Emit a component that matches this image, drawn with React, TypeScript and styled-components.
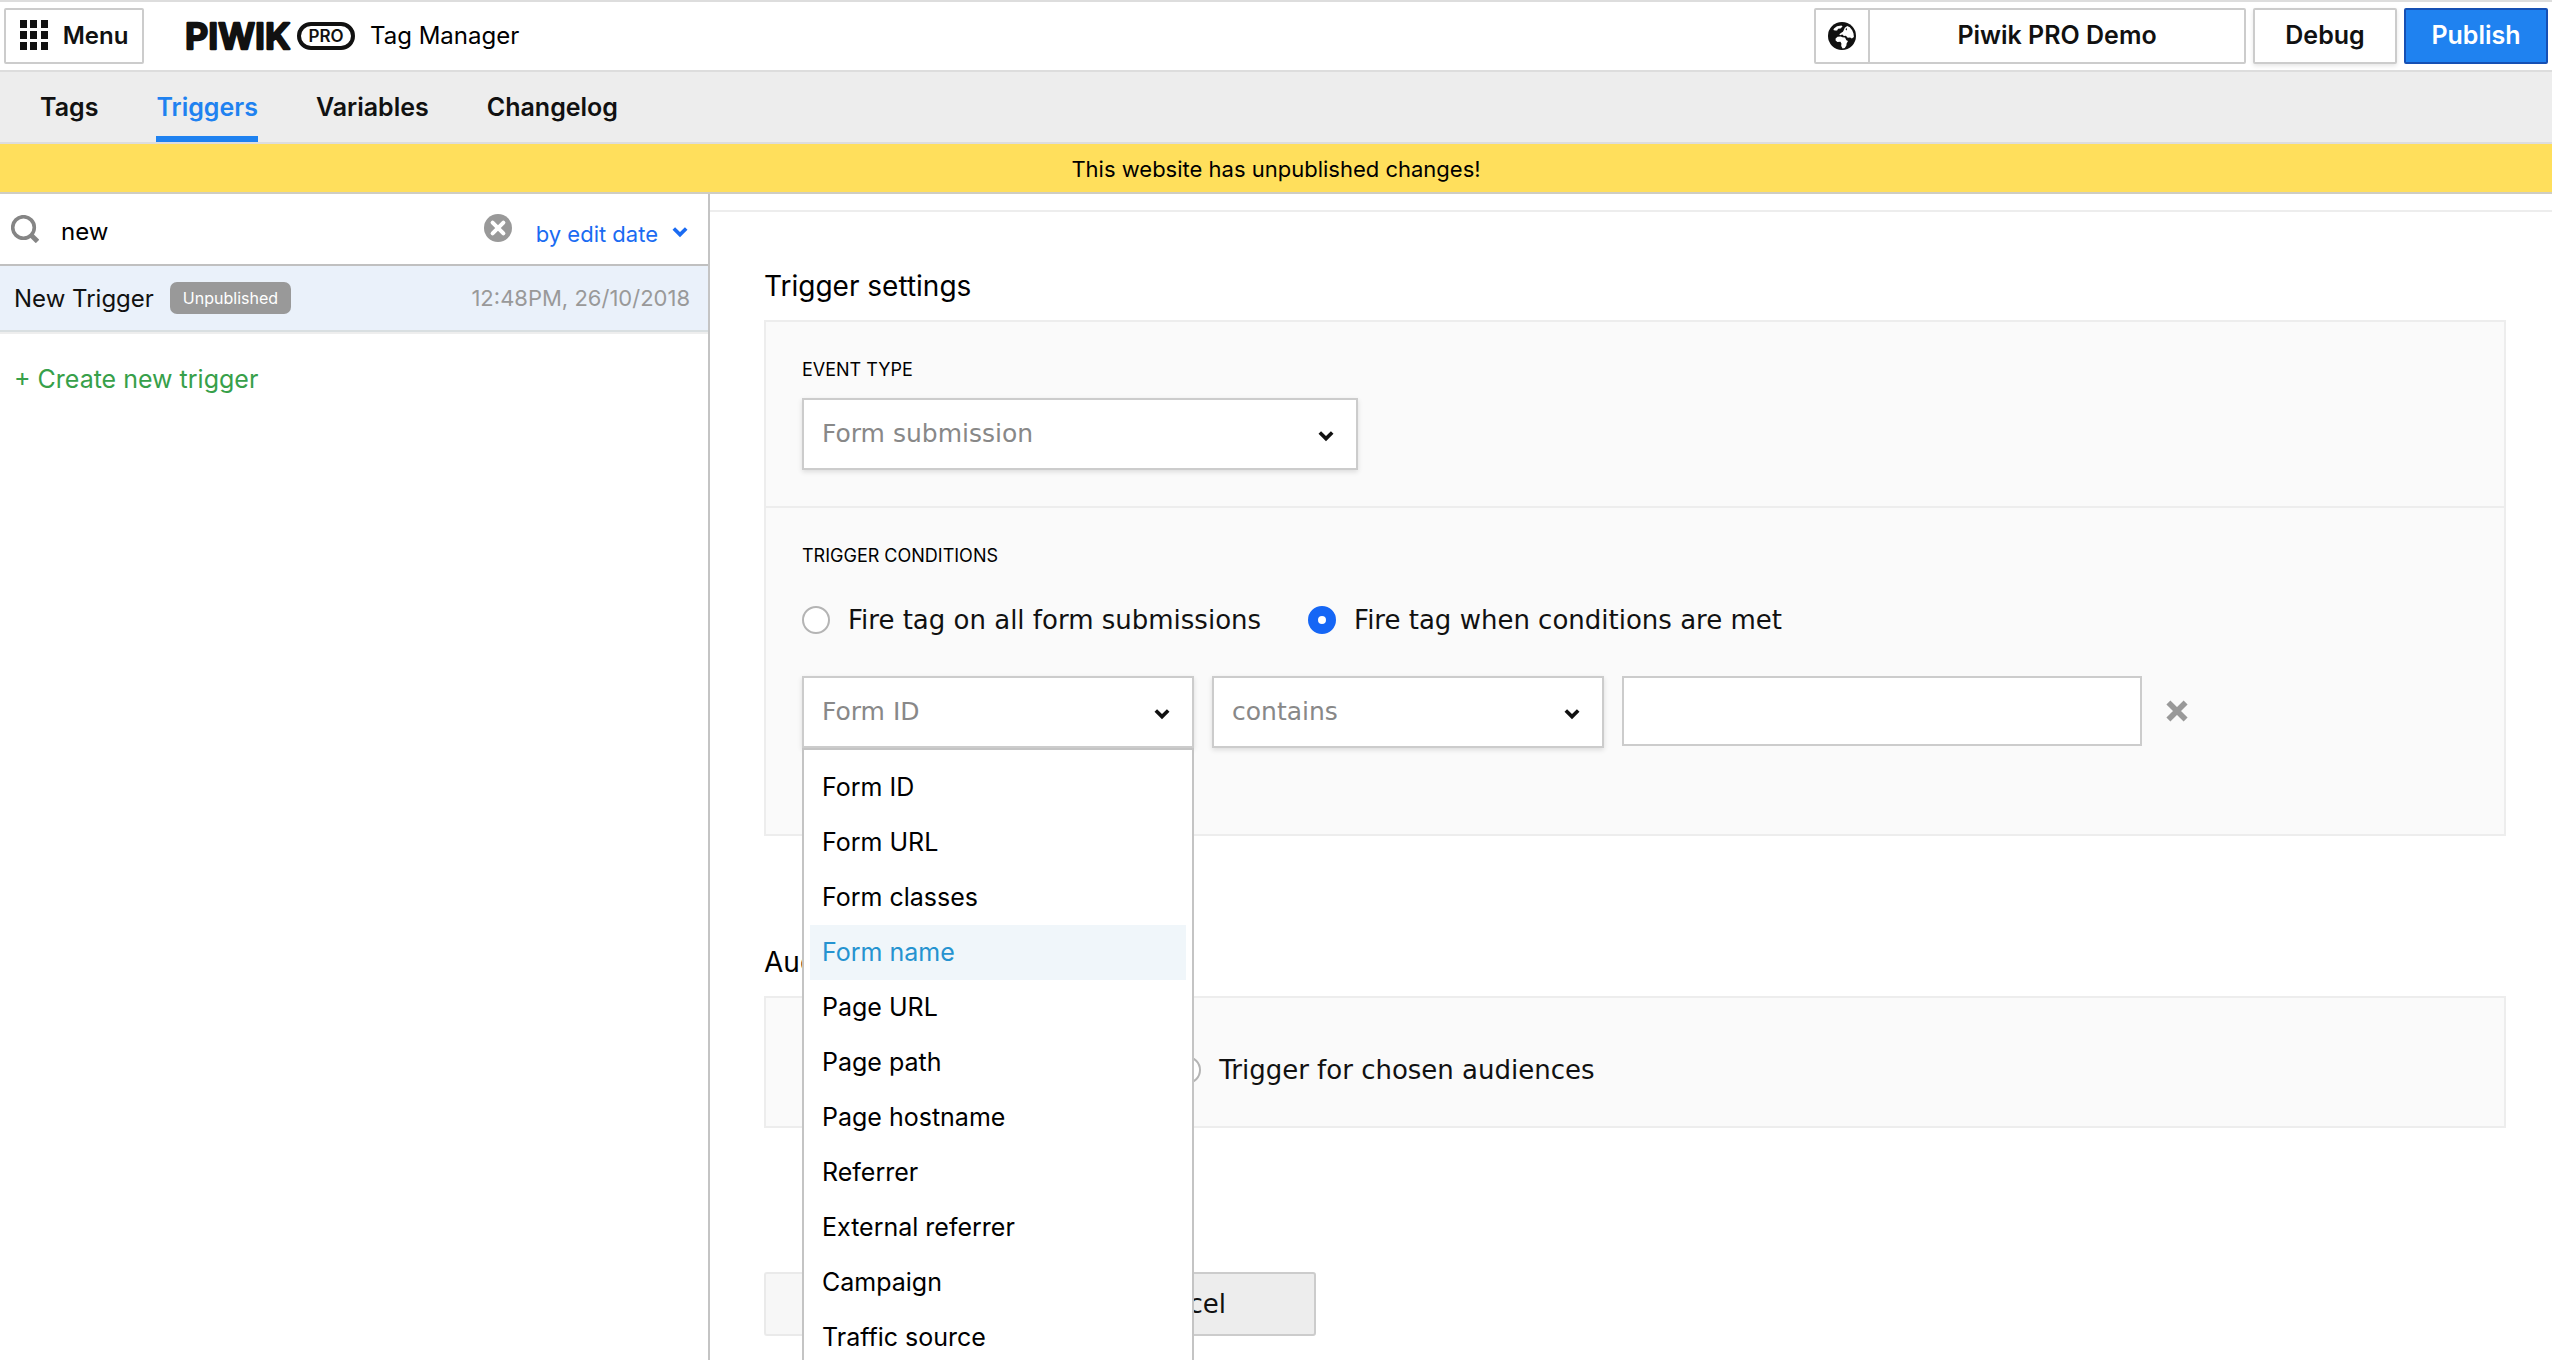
import React, { useState } from "react";
import styled, { createGlobalStyle, css } from "styled-components";

const uiFont = `Inter, Roboto, "Liberation Sans", sans-serif`;
const formFont = `"DejaVu Sans", "Noto Sans", sans-serif`;

const color = {
  ink: "#111",
  blue: "#1f82f0",
  link: "#1a6bf2",
  border: "#ccc",
  hairline: "#ededed",
  muted: "#999",
};

const GlobalStyle = createGlobalStyle`
  *, *::before, *::after { box-sizing: border-box; }
  body { margin: 0; background: #fff; color: #000; font-family: ${uiFont}; font-size: 24px; }
  button, input, select { font-family: inherit; font-size: inherit; color: inherit; margin: 0; }
  button { cursor: pointer; }
`;

const Shell = styled.div`
  display: flex;
  flex-direction: column;
  height: 100vh;
  overflow: hidden;
`;

/* ---------- header ---------- */

const Header = styled.header`
  display: flex;
  align-items: center;
  flex: none;
  height: 72px;
  padding: 0 4px;
  border-top: 2px solid #ddd;
  border-bottom: 2px solid #ddd;
`;

const BarButton = styled.button<{ $primary?: boolean; $wide?: boolean }>`
  display: flex;
  align-items: center;
  justify-content: center;
  gap: 15px;
  height: 56px;
  min-width: ${(p) => (p.$wide ? 144 : 140)}px;
  padding: 0 12px 2px;
  border: 2px solid ${(p) => (p.$primary ? "#1650b4" : color.border)};
  border-radius: 2px;
  background: ${(p) => (p.$primary ? color.blue : "#fff")};
  color: ${(p) => (p.$primary ? "#fff" : color.ink)};
  font-size: ${(p) => (p.$wide ? 25 : 24)}px;
  font-weight: 600;
  ${(p) => p.$wide && !p.$primary && css`box-shadow: 0 2px 4px rgba(0, 0, 0, 0.1);`}
`;

const Brand = styled.a`
  display: flex;
  align-items: center;
  gap: 15px;
  margin-left: 42px;
  color: #000;
  text-decoration: none;
`;

const ProductName = styled.span`
  padding-bottom: 2px;
`;

const HeaderActions = styled.div`
  display: flex;
  gap: 7px;
  margin-left: auto;
`;

const SitePicker = styled.div`
  display: flex;
  height: 56px;
  border: 2px solid ${color.border};
  border-radius: 2px;
`;

const SiteIconButton = styled.button`
  display: grid;
  place-items: center;
  width: 54px;
  padding: 0;
  border: 0;
  border-right: 2px solid ${color.border};
  background: #fff;
`;

const SiteName = styled.button`
  width: 374px;
  padding: 0 0 2px;
  border: 0;
  background: #fff;
  color: ${color.ink};
  font-size: 25px;
  font-weight: 600;
`;

/* ---------- navigation ---------- */

const Nav = styled.nav`
  display: flex;
  gap: 58px;
  flex: none;
  height: 72px;
  padding-left: 40px;
  border-bottom: 2px solid #ddd;
  background: #ededed;
`;

const Tab = styled.a<{ $active: boolean }>`
  display: flex;
  align-items: center;
  padding-top: 6px;
  border-bottom: 6px solid ${(p) => (p.$active ? color.blue : "transparent")};
  color: ${(p) => (p.$active ? color.blue : color.ink)};
  font-size: 25px;
  font-weight: 600;
  text-decoration: none;
`;

const Banner = styled.div`
  flex: none;
  height: 50px;
  border-bottom: 2px solid #cfcdc2;
  background: #ffdf5c;
  font-size: 22px;
  line-height: 50px;
  text-align: center;
`;

const Body = styled.div`
  display: flex;
  flex: 1;
  min-height: 0;
`;

/* ---------- sidebar ---------- */

const Sidebar = styled.aside`
  flex: none;
  width: 710px;
  border-right: 2px solid #c4c4c4;
`;

const SearchRow = styled.div`
  display: flex;
  align-items: center;
  height: 72px;
  padding: 0 20px 0 11px;
  border-bottom: 2px solid #c0c0c0;
`;

const SearchInput = styled.input`
  flex: 1;
  min-width: 0;
  margin-left: 20px;
  padding: 4px 2px 0 2px;
  border: 0;
  outline: 0;
  background: transparent;
`;

const ClearButton = styled.button`
  display: flex;
  padding: 0 0 3px;
  border: 0;
  background: none;
`;

const SortButton = styled.button`
  display: flex;
  align-items: center;
  gap: 14px;
  margin-left: 24px;
  padding: 10px 0 0;
  border: 0;
  background: none;
  color: ${color.link};
  font-size: 22px;

  svg {
    margin-bottom: 4px;
  }
`;

const TriggerRow = styled.a`
  display: flex;
  align-items: center;
  height: 68px;
  padding: 0 18px 2px 14px;
  border-bottom: 2px solid #eee;
  box-shadow: inset 0 -2px 0 #d9dfe1;
  background: #eaf1fa;
  color: ${color.ink};
  text-decoration: none;
`;

const Badge = styled.span`
  margin-left: 16px;
  padding: 0 13px;
  border-radius: 7px;
  background: ${color.muted};
  color: #fff;
  font-size: 16px;
  line-height: 32px;
`;

const EditTime = styled.time`
  margin-left: auto;
  color: ${color.muted};
  font-size: 22px;
`;

const CreateLink = styled.a`
  display: block;
  padding: 29px 14px;
  color: #37a04a;
  font-size: 25px;
  line-height: 32px;
  text-decoration: none;
`;

/* ---------- editor ---------- */

const Main = styled.main`
  flex: 1;
  min-width: 0;
  padding-top: 16px;
`;

const Editor = styled.form`
  padding: 54px 46px 0 54px;
  border-top: 2px solid ${color.hairline};
`;

const Section = styled.section`
  & + & {
    margin-top: 106px;
  }
`;

const Heading = styled.h2`
  margin: 0 0 14px;
  font-size: 28px;
  font-weight: 400;
  line-height: 40px;
`;

const Panel = styled.div`
  border: 2px solid ${color.hairline};
  background: #fafafa;
`;

const Block = styled.div<{ $top?: number; $bottom: number }>`
  padding: ${(p) => p.$top ?? 36}px 36px ${(p) => p.$bottom}px;

  & + & {
    border-top: 2px solid ${color.hairline};
  }
`;

const Caption = styled.label`
  display: block;
  font-size: 18px;
  line-height: 24px;
  text-transform: uppercase;
`;

const RadioRow = styled.div`
  display: flex;
  gap: 47px;
  font-family: ${formFont};
  font-size: 26px;
  line-height: 28px;
  color: ${color.ink};

  ${Caption} + & {
    margin-top: 38px;
  }
`;

const RadioLabel = styled.label`
  display: flex;
  gap: 18px;
  white-space: nowrap;
`;

const Radio = styled.input`
  appearance: none;
  flex: none;
  width: 28px;
  height: 28px;
  margin: 0;
  border: 2px solid #b4b4b4;
  border-radius: 50%;
  background: #fff;

  &:checked {
    border: 10px solid #1566f5;
  }
`;

const Field = styled.div<{ $width: number }>`
  position: relative;
  flex: 0 1 ${(p) => p.$width}px;
  max-width: ${(p) => p.$width}px;

  ${Caption} + & {
    margin-top: 16px;
  }
`;

const Select = styled.select`
  appearance: none;
  display: block;
  width: 100%;
  height: 72px;
  padding: 0 56px 1px 18px;
  border: 2px solid ${color.border};
  border-radius: 0;
  outline: 0;
  background: #fff;
  box-shadow: 0 2px 5px rgba(0, 0, 0, 0.12);
  color: #888;
  font-family: ${formFont};
  font-size: 25px;
`;

const SelectArrow = styled.span`
  position: absolute;
  top: 32px;
  right: 24px;
  display: flex;
  color: ${color.ink};
  pointer-events: none;
`;

const Conditions = styled.div`
  display: flex;
  gap: 18px;
  margin-top: 42px;
`;

const ValueInput = styled.input`
  flex: 0 1 520px;
  min-width: 0;
  height: 70px;
  padding: 0 18px;
  border: 2px solid ${color.border};
  border-radius: 0;
  outline: 0;
  background: #fff;
  font-size: 25px;
`;

const RemoveButton = styled.button`
  display: flex;
  align-items: center;
  height: 70px;
  padding: 0 6px;
  border: 0;
  background: none;
`;

const Options = styled.ul`
  position: absolute;
  z-index: 5;
  top: 72px;
  left: 0;
  right: 0;
  margin: 0;
  padding: 10px 6px;
  border: 2px solid #c4c4c4;
  background: #fff;
  list-style: none;
`;

const Option = styled.li<{ $active: boolean }>`
  padding: 0 12px;
  background: ${(p) => (p.$active ? "#f0f6fa" : "transparent")};
  color: ${(p) => (p.$active ? "#2593d0" : "#000")};
  font-size: 25px;
  line-height: 55px;
  cursor: pointer;
`;

const FormActions = styled.div`
  display: flex;
  gap: 16px;
  margin-top: 144px;
`;

const ActionButton = styled.button`
  width: 268px;
  height: 64px;
  padding: 0;
  border: 2px solid ${color.border};
  border-radius: 3px;
  background: #ededed;
  color: ${color.ink};
  font-family: ${formFont};
  font-size: 26px;

  &:disabled {
    opacity: 0.4;
  }
`;

/* ---------- drawings ---------- */

const LogoDrawing = styled.svg`
  overflow: visible;
`;

const GridIcon = () => (
  <svg width="28" height="30" viewBox="0 0 28 30" fill={color.ink} aria-hidden="true">
    {[0, 11, 22].map((y) => [0, 10, 21].map((x) => <rect key={`${x}-${y}`} x={x} y={y} width="7" height="8" />))}
  </svg>
);

const Logo = () => (
  <LogoDrawing width="169" height="30" viewBox="0 0 169 30" role="img" aria-label="Piwik PRO">
    <text
      x="-1"
      y="28"
      fontFamily={uiFont}
      fontSize="36"
      fontWeight="600"
      fill={color.ink}
      stroke={color.ink}
      strokeWidth="2.4"
      strokeLinejoin="round"
    >
      PIWIK
    </text>
    <rect x="113" y="3" width="54" height="24" rx="12" fill="none" stroke={color.ink} strokeWidth="4" />
    <text x="140" y="21" textAnchor="middle" fontFamily={uiFont} fontSize="17" fontWeight="600" fill={color.ink}>
      PRO
    </text>
  </LogoDrawing>
);

const GlobeIcon = () => (
  <svg width="28" height="28" viewBox="0 0 28 28" aria-hidden="true">
    <circle cx="14" cy="14" r="14" fill={color.ink} />
    <g fill="#fff">
      <path d="M6 6.5 9 4.2l4.5-.8 1 1.2-2 1.8-2.4.4-1 1.6L7 8.6 5.4 8z" />
      <path d="M15.6 8.4l1.2-2.6 2.4-1.8 2.6 1.2 2.4 3 1.3 3.2.4 3.6-2 1.4-1.8-1-2.4.4-1.8-2-2 .2-1.6-1.4-2.2.6-.8-1 2-1.4 1.6-1z" />
      <path d="M7.6 16.6l2-1.8 3.2-.4 1.6.8 2.6.4 1.4 2.6 1.6.8-1.4 2.6-.2 2-1.6 2.4-2.2.4-1.4-2.4.2-2.6-1-1.6-3 .2-1.8-1.6z" />
    </g>
    <path d="M17.6 7.2l1-1.4.4 1.6-.8 1.2z" fill={color.ink} />
  </svg>
);

const SearchIcon = () => (
  <svg width="28" height="28" viewBox="0 0 28 28" fill="none" stroke="#858585" aria-hidden="true">
    <circle cx="12.5" cy="12.5" r="10.8" strokeWidth="3.6" />
    <path d="M20.5 20.5 26.5 26.5" strokeWidth="4.8" />
  </svg>
);

const ClearIcon = () => (
  <svg width="28" height="28" viewBox="0 0 28 28" aria-hidden="true">
    <circle cx="14" cy="14" r="14" fill={color.muted} />
    <path d="M8.6 8.6 19.4 19.4M19.4 8.6 8.6 19.4" stroke="#fff" strokeWidth="4" strokeLinecap="round" />
  </svg>
);

const ChevronIcon = () => (
  <svg width="16" height="12" viewBox="0 0 16 12" fill="none" stroke="currentColor" strokeWidth="3.6" aria-hidden="true">
    <path d="M1.8 2.4 8 8.6 14.2 2.4" />
  </svg>
);

const RemoveIcon = () => (
  <svg width="22" height="22" viewBox="0 0 22 22" stroke={color.muted} strokeWidth="5.6" aria-hidden="true">
    <path d="M2.4 2.4 19.6 19.6M19.6 2.4 2.4 19.6" />
  </svg>
);

/* ---------- page ---------- */

const tabs = ["Tags", "Triggers", "Variables", "Changelog"];

const variables = [
  "Form ID",
  "Form URL",
  "Form classes",
  "Form name",
  "Page URL",
  "Page path",
  "Page hostname",
  "Referrer",
  "External referrer",
  "Campaign",
  "Traffic source",
];

export default function App() {
  const [query, setQuery] = useState("new");
  const [highlighted, setHighlighted] = useState("Form name");
  const [variable, setVariable] = useState("Form ID");

  return (
    <>
      <GlobalStyle />
      <Shell>
        <Header>
          <BarButton type="button">
            <GridIcon />
            Menu
          </BarButton>
          <Brand href="#home">
            <Logo />
            <ProductName>Tag Manager</ProductName>
          </Brand>
          <HeaderActions>
            <SitePicker>
              <SiteIconButton type="button" aria-label="Websites">
                <GlobeIcon />
              </SiteIconButton>
              <SiteName type="button">Piwik PRO Demo</SiteName>
            </SitePicker>
            <BarButton type="button" $wide>
              Debug
            </BarButton>
            <BarButton type="button" $wide $primary>
              Publish
            </BarButton>
          </HeaderActions>
        </Header>

        <Nav>
          {tabs.map((tab) => (
            <Tab key={tab} href={`#${tab.toLowerCase()}`} $active={tab === "Triggers"}>
              {tab}
            </Tab>
          ))}
        </Nav>

        <Banner role="status">This website has unpublished changes!</Banner>

        <Body>
          <Sidebar>
            <SearchRow>
              <SearchIcon />
              <SearchInput aria-label="Search triggers" value={query} onChange={(e) => setQuery(e.target.value)} />
              <ClearButton type="button" aria-label="Clear search" onClick={() => setQuery("")}>
                <ClearIcon />
              </ClearButton>
              <SortButton type="button">
                by edit date
                <ChevronIcon />
              </SortButton>
            </SearchRow>
            <TriggerRow href="#new-trigger">
              New Trigger
              <Badge>Unpublished</Badge>
              <EditTime>12:48PM, 26/10/2018</EditTime>
            </TriggerRow>
            <CreateLink href="#create">+ Create new trigger</CreateLink>
          </Sidebar>

          <Main>
            <Editor onSubmit={(e) => e.preventDefault()}>
              <Section>
                <Heading>Trigger settings</Heading>
                <Panel>
                  <Block $bottom={36}>
                    <Caption htmlFor="event-type">Event type</Caption>
                    <Field $width={556}>
                      <Select id="event-type">
                        <option>Form submission</option>
                      </Select>
                      <SelectArrow>
                        <ChevronIcon />
                      </SelectArrow>
                    </Field>
                  </Block>
                  <Block $bottom={86}>
                    <Caption as="div" id="conditions">
                      Trigger conditions
                    </Caption>
                    <RadioRow role="radiogroup" aria-labelledby="conditions">
                      <RadioLabel>
                        <Radio type="radio" name="fire" />
                        Fire tag on all form submissions
                      </RadioLabel>
                      <RadioLabel>
                        <Radio type="radio" name="fire" defaultChecked />
                        Fire tag when conditions are met
                      </RadioLabel>
                    </RadioRow>
                    <Conditions>
                      <Field $width={392}>
                        <Select aria-label="Variable" value={variable} onChange={(e) => setVariable(e.target.value)}>
                          {variables.map((name) => (
                            <option key={name}>{name}</option>
                          ))}
                        </Select>
                        <SelectArrow>
                          <ChevronIcon />
                        </SelectArrow>
                        <Options role="listbox" aria-label="Variables">
                          {variables.map((name) => (
                            <Option
                              key={name}
                              role="option"
                              aria-selected={name === variable}
                              $active={name === highlighted}
                              onMouseEnter={() => setHighlighted(name)}
                              onClick={() => setVariable(name)}
                            >
                              {name}
                            </Option>
                          ))}
                        </Options>
                      </Field>
                      <Field $width={392}>
                        <Select aria-label="Operator">
                          <option>contains</option>
                        </Select>
                        <SelectArrow>
                          <ChevronIcon />
                        </SelectArrow>
                      </Field>
                      <ValueInput type="text" aria-label="Value" />
                      <RemoveButton type="button" aria-label="Remove condition">
                        <RemoveIcon />
                      </RemoveButton>
                    </Conditions>
                  </Block>
                </Panel>
              </Section>

              <Section>
                <Heading id="audiences">Audiences</Heading>
                <Panel>
                  <Block $top={58} $bottom={42}>
                    <RadioRow role="radiogroup" aria-labelledby="audiences">
                      <RadioLabel>
                        <Radio type="radio" name="audience" defaultChecked />
                        Trigger for any visitor
                      </RadioLabel>
                      <RadioLabel>
                        <Radio type="radio" name="audience" />
                        Trigger for chosen audiences
                      </RadioLabel>
                    </RadioRow>
                  </Block>
                </Panel>
              </Section>

              <FormActions>
                <ActionButton type="submit" disabled>
                  Save
                </ActionButton>
                <ActionButton type="button">Cancel</ActionButton>
              </FormActions>
            </Editor>
          </Main>
        </Body>
      </Shell>
    </>
  );
}
